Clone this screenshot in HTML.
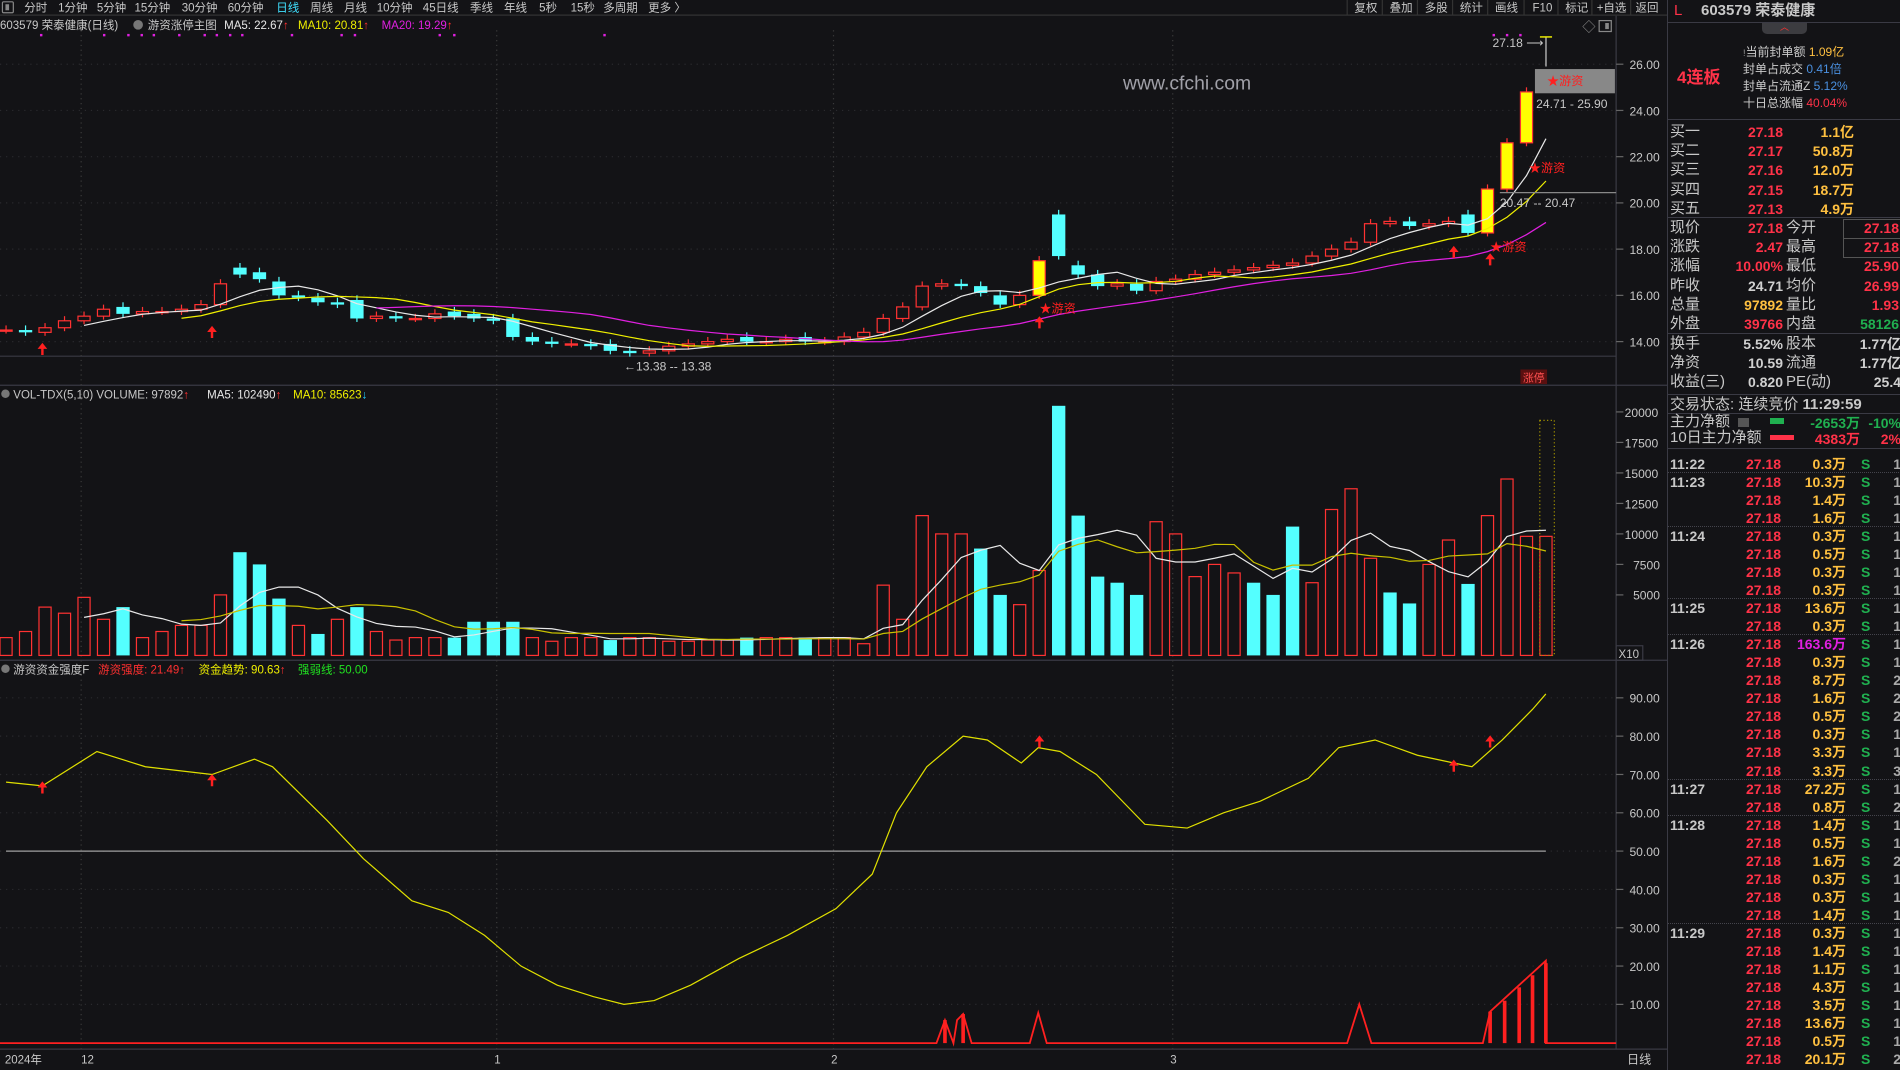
<!DOCTYPE html>
<html><head><meta charset="utf-8">
<style>
html,body{margin:0;padding:0;background:#131316;overflow:hidden;}
body{width:1900px;height:1070px;position:relative;font-family:"Liberation Sans","Noto Sans CJK SC",sans-serif;color:#c8c8c8;}
#chart{position:absolute;left:0;top:0;}
#rp{position:absolute;left:1667px;top:0;width:233px;height:1070px;border-left:1px solid #3a3a44;background:#131316;}
.a{position:absolute;white-space:nowrap;line-height:1;}
.hl{position:absolute;left:0;width:233px;height:1px;background:#3a3a44;}
.dl{position:absolute;left:0;width:233px;border-top:1px dotted #44444c;}
.r{color:#ff3248}.y{color:#ffc040}.g{color:#20b050}.w{color:#d0d0d0}.m{color:#e020e0}
.lb{font-size:15px;color:#c8c8c8}
.nb{font-weight:bold;font-size:14px;}
</style></head><body>
<svg id="chart" width="1667" height="1070" viewBox="0 0 1376 883.2" preserveAspectRatio="none" xmlns="http://www.w3.org/2000/svg" font-family="Liberation Sans, Noto Sans CJK SC, sans-serif"></svg>
<div id="rp"></div>
<script>
const S=document.getElementById('chart');let h='';
const bg='#131316';
h+='<rect x="0" y="0" width="1376" height="12" fill="#131316"/><line x1="0" y1="12.5" x2="1376" y2="12.5" stroke="#333"/>';
h+='<rect x="2" y="1.5" width="9" height="9" fill="none" stroke="#888" rx="1"/><rect x="4.5" y="3.5" width="3" height="5" fill="#888"/>';
const tb=[['分时',20],['1分钟',48],['5分钟',80],['15分钟',111],['30分钟',150],['60分钟',188],['日线',228],['周线',256],['月线',284],['10分钟',311],['45日线',349],['季线',388],['年线',416],['5秒',445],['15秒',471],['多周期',498],['更多 〉',535]];
tb.forEach(t=>h+=`<text x="${t[1]}" y="9.5" font-size="9.5" fill="${t[0]=='日线'?'#40e0ff':'#c8c8c8'}">${t[0]}</text>`);
[['复权',1118],['叠加',1147],['多股',1176],['统计',1205],['画线',1234],['F10',1265],['标记',1292],['+自选',1318],['返回',1350]].forEach(t=>h+=`<text x="${t[1]}" y="9.5" font-size="9.5" fill="#c8c8c8">${t[0]}</text>`);
[1112,1141,1170,1199,1228,1258,1286,1314,1346].forEach(x=>h+=`<line x1="${x}" y1="0" x2="${x}" y2="12" stroke="#333"/>`);
h+='<line x1="1334" y1="13" x2="1334" y2="866" stroke="#3a3a44"/>';
[318,545,866].forEach(y=>h+=`<line x1="0" y1="${y}" x2="1376" y2="${y}" stroke="#3a3a44"/>`);
h+='<line x1="0" y1="294" x2="1334" y2="294" stroke="#3a3a44"/>';
[67,410,688,968].forEach(x=>h+=`<line x1="${x}" y1="25" x2="${x}" y2="866" stroke="#3a3a3a" stroke-dasharray="1,3"/>`);
h+=`<text x="0" y="24" font-size="9.5" fill="#c8c8c8">603579 荣泰健康(日线)</text><circle cx="114" cy="20.5" r="4" fill="#777"/><text x="122" y="24" font-size="9.5" fill="#c8c8c8">游资涨停主图</text><text x="185" y="24" font-size="9.5" fill="#e8e8e8">MA5: 22.67<tspan fill="#ff3030">↑</tspan></text><text x="246" y="24" font-size="9.5" fill="#f0f000">MA10: 20.81<tspan fill="#ff3030">↑</tspan></text><text x="315" y="24" font-size="9.5" fill="#e020e0">MA20: 19.29<tspan fill="#ff3030">↑</tspan></text>`;
[33,85,105,116,126,147,168,178,189,199,240,281,292,362,374,498,1232,1243,1254].forEach(x=>h+=`<rect x="${x}" y="28" width="2" height="2" fill="#e020e0"/>`);
const py=p=>53+(26-p)*19.08;
for(let p=14;p<=26;p+=2){const y=py(p);h+=`<line x1="1334" y1="${y}" x2="1340" y2="${y}" stroke="#666"/><line x1="0" y1="${y}" x2="1334" y2="${y}" stroke="#2a2a2e" stroke-dasharray="1,4"/><text x="1345" y="${y+4}" font-size="10" fill="#c8c8c8">${p.toFixed(2)}</text>`;}
const c=[14.5,14.4,14.6,14.9,15.1,15.4,15.2,15.3,15.3,15.4,15.6,16.5,16.9,16.7,16.0,15.9,15.7,15.6,15.0,15.1,15.0,15.0,15.2,15.1,15.0,14.9,14.2,14.0,13.9,13.9,13.8,13.6,13.5,13.6,13.8,13.9,14.0,14.1,14.0,14.0,14.1,14.0,14.0,14.2,14.4,15.0,15.5,16.4,16.5,16.4,16.1,15.6,16.0,17.5,17.7,16.9,16.4,16.5,16.2,16.6,16.7,16.9,17.0,17.1,17.2,17.3,17.4,17.7,18.0,18.3,19.1,19.2,19.0,19.1,19.2,18.7,20.6,22.6,24.8,27.18];
const op={6:15.5,12:17.2,13:17.0,14:16.6,18:15.8,23:15.3,24:15.2,26:15.0,31:13.9,38:14.2,41:14.2,50:16.4,51:16.0,53:16.0,54:19.5,55:17.3,58:16.5,72:19.2,75:19.5,76:18.7,77:20.6,78:22.6,79:27.18};
const yel=new Set([53,76,77,78]);
const cx=i=>5+i*16.09;
const vol=[1500,2000,4000,3500,4800,3000,4000,1500,2000,2500,2500,5000,8500,7500,4700,2500,1800,3000,4000,2000,1300,1500,1500,1500,2800,2800,2800,1500,1200,1500,1500,1300,1500,1500,1200,1200,1300,1300,1500,1500,1500,1500,1500,1500,
1000,5800,3000,11500,10000,10000,8800,5000,4200,7000,20500,11500,6500,6000,5000,11000,10000,6500,7500,6800,6000,5000,10600,6000,12000,13700,8000,5200,4300,7500,9500,5900,11500,14500,9800,9800];
const vc=new Set([6,12,13,14,16,18,23,24,25,26,31,38,41,50,51,54,55,56,57,58,64,65,66,71,72,75]);
const ma=(a,n)=>a.map((v,i)=>i<n-1?null:a.slice(i-n+1,i+1).reduce((s,x)=>s+x,0)/n);
const line=(arr,f,col)=>{let d='';arr.forEach((v,i)=>{if(v!=null)d+=(d?'L':'M')+cx(i).toFixed(1)+' '+f(v).toFixed(1);});return `<path d="${d}" fill="none" stroke="${col}" stroke-width="1"/>`;};
for(let i=0;i<80;i++){const o=op[i]!=null?op[i]:c[i-1]||c[i];const cl=c[i];const x=cx(i);
 if(i==79){h+=`<line x1="${x}" y1="${py(27.18)}" x2="${x}" y2="${py(25.9)}" stroke="#ccc"/><line x1="${x-5}" y1="${py(27.18)}" x2="${x+5}" y2="${py(27.18)}" stroke="#f0f000" stroke-width="1.2"/>`;continue;}
 const hi=Math.max(o,cl)+0.2,lo=Math.min(o,cl)-0.15;const t=py(Math.max(o,cl)),b=py(Math.min(o,cl));
 if(yel.has(i)){h+=`<line x1="${x}" y1="${py(hi)}" x2="${x}" y2="${py(lo)}" stroke="#ff3232"/><rect x="${x-5}" y="${t}" width="10" height="${b-t}" fill="#ffff00" stroke="#ff3232"/>`;}
 else if(cl<o){h+=`<line x1="${x}" y1="${py(hi)}" x2="${x}" y2="${py(lo)}" stroke="#54ffff"/><rect x="${x-5.5}" y="${t}" width="11" height="${Math.max(b-t,1)}" fill="#54ffff"/>`;}
 else{h+=`<line x1="${x}" y1="${py(hi)}" x2="${x}" y2="${t}" stroke="#ff3232"/><line x1="${x}" y1="${b}" x2="${x}" y2="${py(lo)}" stroke="#ff3232"/><rect x="${x-5}" y="${t}" width="10" height="${Math.max(b-t,1)}" fill="${bg}" stroke="#ff3232"/>`;}
}
h+=line(ma(c,5),py,'#e8e8e8');h+=line(ma(c,10),py,'#f0f000');h+=line(ma(c,20),py,'#e020e0');
h+=`<text x="927" y="74" font-size="16" fill="#a0a0a8">www.cfchi.com</text>`;
h+=`<text x="1232" y="39" font-size="10" fill="#c8c8c8">27.18 ⟶</text>`;
h+=`<rect x="1267" y="57" width="66" height="20" fill="#888"/><text x="1277" y="70" font-size="10" fill="#ff2020">★游资</text>`;
h+=`<text x="1268" y="89" font-size="10" fill="#c8c8c8">24.71 - 25.90</text>`;
h+=`<line x1="1238" y1="159" x2="1334" y2="159" stroke="#888"/><text x="1238" y="171" font-size="10" fill="#c8c8c8">20.47 -- 20.47</text>`;
h+=`<text x="515" y="306" font-size="10" fill="#c8c8c8">←13.38 -- 13.38</text>`;
h+=`<rect x="1255" y="305" width="22" height="12" fill="#5a1010"/><text x="1257" y="315" font-size="9" fill="#ff5050">涨停</text>`;
[[1262,142],[858,258],[1230,207]].forEach(a=>h+=`<text x="${a[0]}" y="${a[1]}" font-size="10" fill="#ff2020">★游资</text>`);
[[35,290],[175,276],[858,268],[1200,210],[1230,216]].forEach(a=>h+=`<path d="M${a[0]} ${a[1]-7}l-4 5h3v5h2v-5h3z" fill="#ff2020"/>`);
h+=`<text x="1306" y="26" font-size="11" fill="#888">◇</text><rect x="1320" y="17" width="10" height="9" fill="none" stroke="#888"/><rect x="1325" y="19" width="3" height="5" fill="#888"/>`;
const vy=v=>340+(20000-v)*0.01007;
h+=`<circle cx="4.5" cy="325" r="3.5" fill="#777"/><text x="11" y="329" font-size="9.5" fill="#c8c8c8">VOL-TDX(5,10) VOLUME: 97892<tspan fill="#ff3030">↑</tspan></text><text x="171" y="329" font-size="9.5" fill="#e8e8e8">MA5: 102490<tspan fill="#ff3030">↑</tspan></text><text x="242" y="329" font-size="9.5" fill="#f0f000">MA10: 85623<tspan fill="#20d0ff">↓</tspan></text>`;
[20000,17500,15000,12500,10000,7500,5000].forEach(v=>{const y=vy(v);h+=`<line x1="1334" y1="${y}" x2="1340" y2="${y}" stroke="#666"/><text x="${1341+(v<10000?7:0)}" y="${y+4}" font-size="10" fill="#c8c8c8">${v}</text>`;});
h+=`<rect x="1334" y="533" width="22" height="12" fill="none" stroke="#3a3a44"/><text x="1336" y="543" font-size="9.5" fill="#c8c8c8">X10</text>`;
for(let i=0;i<80;i++){const x=cx(i),t=vy(vol[i]),b=541;
 if(vc.has(i))h+=`<rect x="${x-5.5}" y="${t}" width="11" height="${b-t}" fill="#54ffff"/>`;
 else h+=`<rect x="${x-5}" y="${t}" width="10" height="${b-t}" fill="none" stroke="#ff3232"/>`;}
h+=`<rect x="1271" y="347" width="12" height="194" fill="none" stroke="#a09000" stroke-dasharray="1,2"/>`;
h+=line(ma(vol,5),vy,'#e8e8e8');h+=line(ma(vol,10),vy,'#c8c000');
const iy=v=>576+(90-v)*3.163;
h+=`<circle cx="4.5" cy="552" r="3.5" fill="#777"/><text x="11" y="556" font-size="9.5" fill="#c8c8c8">游资资金强度F</text><text x="81" y="556" font-size="9.5" fill="#ff3030">游资强度: 21.49↑</text><text x="164" y="556" font-size="9.5" fill="#f0f000">资金趋势: 90.63<tspan fill="#ff3030">↑</tspan></text><text x="246" y="556" font-size="9.5" fill="#20e020">强弱线: 50.00</text>`;
for(let v=10;v<=90;v+=10){const y=iy(v);h+=`<line x1="1334" y1="${y}" x2="1340" y2="${y}" stroke="#666"/><line x1="0" y1="${y}" x2="1334" y2="${y}" stroke="#2a2a2e" stroke-dasharray="1,4"/><text x="1345" y="${y+4}" font-size="10" fill="#c8c8c8">${v.toFixed(2)}</text>`;}
h+=`<line x1="5" y1="${iy(50)}" x2="1276" y2="${iy(50)}" stroke="#a0a0a0"/>`;
const pts=[[5,68],[35,67],[80,76],[120,72],[175,70],[210,74],[225,72],[270,58],[300,48],[340,37],[370,34],[400,28],[430,20],[460,15],[490,12],[515,10],[540,11],[570,15],[610,22],[650,28],[690,35],[720,44],[740,60],[765,72],[795,80],[815,79],[843,73],[857,77],[875,76],[905,70],[945,57],[980,56],[1010,60],[1040,63],[1080,69],[1105,77],[1135,79],[1170,75],[1200,73],[1215,72],[1240,79],[1265,87],[1276,91]];
h+=`<path d="${pts.map((p,i)=>(i?'L':'M')+p[0]+' '+iy(p[1]).toFixed(1)).join('')}" fill="none" stroke="#e0e000" stroke-width="1"/>`;
h+=`<path d="M0 861L773 861L780 842L787 861L790 842L795 837L802 861L850 861L857 836L864 861L1112 861L1122 829L1132 861L1224 861L1230 835L1276 793L1276 861L1334 861" fill="none" stroke="#ff2020" stroke-width="1.5"/>`;
[[780,842],[795,837],[1230,835],[1242,826],[1254,815],[1265,805],[1276,795]].forEach(a=>h+=`<rect x="${a[0]-1.5}" y="${a[1]}" width="3" height="${861-a[1]}" fill="#ff2020"/>`);
[[35,652],[175,646],[858,614],[1200,634],[1230,614]].forEach(a=>h+=`<path d="M${a[0]} ${a[1]-7}l-4 5h3v5h2v-5h3z" fill="#ff2020"/>`);
[['2024年',4],['12',67],['1',408],['2',686],['3',966]].forEach(t=>h+=`<text x="${t[1]}" y="878" font-size="9.5" fill="#c8c8c8">${t[0]}</text>`);
h+=`<text x="1343" y="878" font-size="10" fill="#c8c8c8">日线</text>`;
S.innerHTML=h;

let r='';const R=document.getElementById('rp');
const A=(x,y,t,cls,st)=>r+=`<div class="a ${cls||''}" style="left:${x}px;top:${y}px;${st||''}">${t}</div>`;
const RA=(rx,y,t,cls,st)=>r+=`<div class="a ${cls||''}" style="right:${233-rx}px;top:${y}px;${st||''}">${t}</div>`;
A(6,3,'L','r','font-size:15px;');A(33,3,'603579 荣泰健康','','font-size:15px;font-weight:bold;color:#c8c8c8');
r+='<div class="hl" style="top:22px"></div>';
r+='<div class="a" style="left:94px;top:23px;width:45px;height:11px;background:#3c3c40;border-radius:0 0 5px 5px;color:#ff3030;font-size:9px;text-align:center">︿</div>';
A(9,69,'4连板','r','font-size:17px;font-weight:bold');
const inf=[['<span style="color:#999;font-size:9px">!</span>当前封单额',' 1.09亿','y',46],['封单占成交',' 0.41倍','',63],['封单占流通Z',' 5.12%','',80],['十日总涨幅',' 40.04%','r',97]];
inf.forEach(l=>A(75,l[3],l[0]+`<span class="${l[2]}" style="${l[2]?'':'color:#4a90e0'}">${l[1]}</span>`,'','font-size:12px;color:#ccc'));
r+='<div class="hl" style="top:119px"></div>';
[['买一','27.18','1.1亿'],['买二','27.17','50.8万'],['买三','27.16','12.0万'],['买四','27.15','18.7万'],['买五','27.13','4.9万']].forEach((l,k)=>{const y=124+k*19.2;A(2,y,l[0],'lb');RA(115,y+1,l[1],'r nb');RA(186,y+1,l[2],'y nb');});
r+='<div class="hl" style="top:217px"></div>';
const st=[['现价','27.18','r','今开','27.18','r',1],['涨跌','2.47','r','最高','27.18','r',1],['涨幅','10.00%','r','最低','25.90','r'],['昨收','24.71','w','均价','26.99','r'],['总量','97892','y','量比','1.93','r'],['外盘','39766','r','内盘','58126','g']];
st.forEach((l,k)=>{const y=220+k*19.2;A(2,y,l[0],'lb');RA(115,y+1,l[1],l[2]+' nb');A(118,y,l[3],'lb');RA(231,y+1,l[4],l[5]+' nb');if(l[6])r+=`<div class="a" style="left:175px;top:${y-1}px;width:56px;height:18px;border:1px solid #555"></div>`;});
r+='<div class="hl" style="top:333px"></div>';
[['换手','5.52%','股本','1.77亿'],['净资','10.59','流通','1.77亿'],['收益(三)','0.820','PE(动)','25.4']].forEach((l,k)=>{const y=336+k*19.2;A(2,y,l[0],'lb');RA(115,y+1,l[1],'w nb');A(118,y,l[2],'lb');RA(233,y+1,l[3],'w nb');});
r+='<div class="hl" style="top:394px"></div>';
A(2,397,'交易状态: 连续竞价 <b>11:29:59</b>','lb');
r+='<div class="hl" style="top:413px"></div>';
A(2,414,'主力净额','lb');r+='<div class="a" style="left:70px;top:418px;width:11px;height:9px;background:#555"></div><div class="a" style="left:102px;top:418px;width:14px;height:6px;background:#20b050"></div>';RA(192,416,'-2653万','g nb');RA(233,416,'-10%','g nb');
A(2,430,'10日主力净额','lb');r+='<div class="a" style="left:102px;top:435px;width:24px;height:5px;background:#ff3248"></div>';RA(192,432,'4383万','r nb');RA(233,432,'2%','r nb');
r+='<div class="hl" style="top:448px"></div>';
const tk=[['11:22','0.3',1],['11:23','10.3',1],['','1.4',1],['','1.6',1],['11:24','0.3',1],['','0.5',1],['','0.3',1],['','0.3',1],['11:25','13.6',1],['','0.3',1],['11:26','163.6',1],['','0.3',1],['','8.7',2],['','1.6',2],['','0.5',2],['','0.3',1],['','3.3',1],['','3.3',3],['11:27','27.2',1],['','0.8',2],['11:28','1.4',1],['','0.5',1],['','1.6',2],['','0.3',1],['','0.3',1],['','1.4',1],['11:29','0.3',1],['','1.4',1],['','1.1',1],['','4.3',1],['','3.5',1],['','13.6',1],['','0.5',1],['','20.1',2]];
tk.forEach((l,k)=>{const y=457+k*18.03;if(l[0]&&k>0)r+=`<div class="dl" style="top:${y-3}px"></div>`;if(l[0])A(2,y,l[0],'w nb','color:#c8c8c8');RA(113,y,'27.18','r nb');RA(178,y,l[1]+'万',(l[1]=='163.6'?'m':'y')+' nb');A(193,y,'S','g nb');RA(233,y,l[2],'nb','color:#aaa');});
R.innerHTML=r;
</script>
</body></html>
